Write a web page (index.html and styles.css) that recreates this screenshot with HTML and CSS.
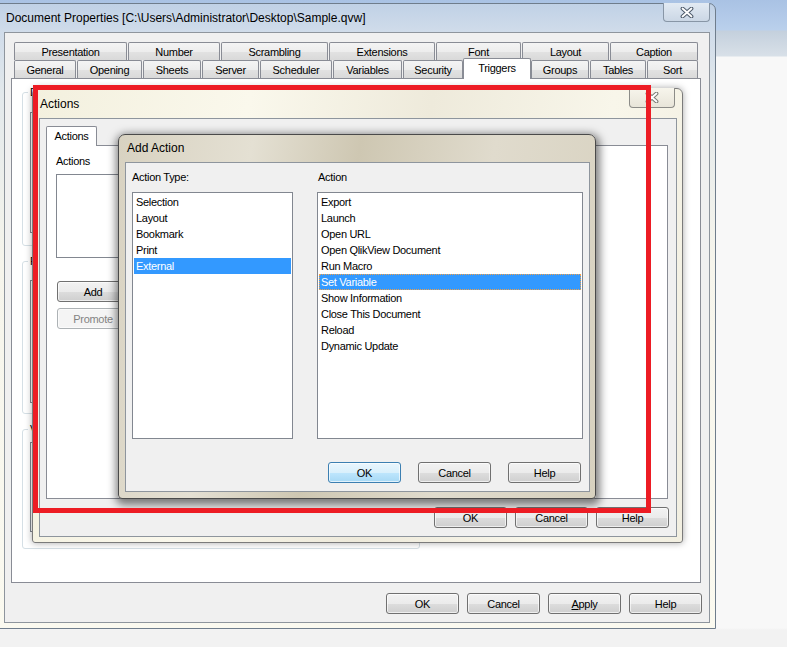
FILE: index.html
```html
<!DOCTYPE html>
<html lang="en">
<head>
<meta charset="utf-8">
<title>Document Properties</title>
<link rel="stylesheet" href="styles.css">
</head>
<body>
<div class="screen">

  <div class="win main-win">
    <div class="titlebar main-title">
      <span class="title-text">Document Properties [C:\Users\Administrator\Desktop\Sample.qvw]</span>
      <div class="cap-close main-close">
        <svg width="14" height="11" viewBox="0 0 14 11"><path class="x-out" d="M2.5 1.5 L11.5 9.5 M11.5 1.5 L2.5 9.5"/><path class="x-in" d="M2.5 1.5 L11.5 9.5 M11.5 1.5 L2.5 9.5"/></svg>
      </div>
    </div>
    <div class="client main-client">
      <div class="tabrows">
        <div class="tabrow row1">
          <div class="tab t-presentation">Presentation</div>
          <div class="tab t-number">Number</div>
          <div class="tab t-scrambling">Scrambling</div>
          <div class="tab t-extensions">Extensions</div>
          <div class="tab t-font">Font</div>
          <div class="tab t-layout">Layout</div>
          <div class="tab t-caption">Caption</div>
        </div>
        <div class="tabrow row2">
          <div class="tab t-general">General</div>
          <div class="tab t-opening">Opening</div>
          <div class="tab t-sheets">Sheets</div>
          <div class="tab t-server">Server</div>
          <div class="tab t-scheduler">Scheduler</div>
          <div class="tab t-variables">Variables</div>
          <div class="tab t-security">Security</div>
          <div class="tab sel t-triggers">Triggers</div>
          <div class="tab t-groups">Groups</div>
          <div class="tab t-tables">Tables</div>
          <div class="tab t-sort">Sort</div>
        </div>
      </div>
      <div class="panel main-panel">
        <fieldset class="gbox g1"><legend>Document Event Triggers</legend><div class="listbox glist l1"></div></fieldset>
        <fieldset class="gbox g2"><legend>Field Event Triggers</legend><div class="listbox glist l2"></div></fieldset>
        <fieldset class="gbox g3"><legend>Variable Event Triggers</legend><div class="listbox glist l3"></div></fieldset>
      </div>
      <div class="btnrow main-btns">
        <div class="btn">OK</div>
        <div class="btn">Cancel</div>
        <div class="btn"><u>A</u>pply</div>
        <div class="btn">Help</div>
      </div>
    </div>
  </div>

  <div class="win actions-win">
    <div class="titlebar dlg-title">
      <span class="title-text">Actions</span>
      <div class="cap-close dlg-close">
        <svg width="14" height="11" viewBox="0 0 14 11"><path class="x-out light" d="M2.5 1.5 L11.5 9.5 M11.5 1.5 L2.5 9.5"/><path class="x-in" d="M2.5 1.5 L11.5 9.5 M11.5 1.5 L2.5 9.5"/></svg>
      </div>
    </div>
    <div class="client actions-client">
      <div class="tabrow small-tabs">
        <div class="tab sel t-actions">Actions</div>
      </div>
      <div class="panel actions-panel">
        <div class="lbl">Actions</div>
        <div class="listbox actions-list"></div>
        <div class="btn side-btn add-btn">Add</div>
        <div class="btn side-btn dis">Promote</div>
      </div>
      <div class="btnrow actions-btns">
        <div class="btn">OK</div>
        <div class="btn">Cancel</div>
        <div class="btn">Help</div>
      </div>
    </div>
  </div>

  <div class="win add-win">
    <div class="titlebar add-title">
      <span class="title-text">Add Action</span>
    </div>
    <div class="client add-client">
      <div class="cols">
        <div class="col col-type">
          <div class="lbl">Action Type:</div>
          <div class="listbox big-list">
            <div class="item">Selection</div>
            <div class="item">Layout</div>
            <div class="item">Bookmark</div>
            <div class="item">Print</div>
            <div class="item selected">External</div>
          </div>
        </div>
        <div class="col col-action">
          <div class="lbl">Action</div>
          <div class="listbox big-list">
            <div class="item">Export</div>
            <div class="item">Launch</div>
            <div class="item">Open URL</div>
            <div class="item">Open QlikView Document</div>
            <div class="item">Run Macro</div>
            <div class="item selected focused">Set Variable</div>
            <div class="item">Show Information</div>
            <div class="item">Close This Document</div>
            <div class="item">Reload</div>
            <div class="item">Dynamic Update</div>
          </div>
        </div>
      </div>
      <div class="btnrow add-btns">
        <div class="btn default">OK</div>
        <div class="btn">Cancel</div>
        <div class="btn">Help</div>
      </div>
    </div>
  </div>

  <div class="redbox"></div>
</div>
</body>
</html>
```

FILE: styles.css
```css
* { box-sizing: border-box; }
html, body { margin: 0; padding: 0; }
body {
  width: 787px;
  height: 647px;
  overflow: hidden;
  font-family: "Liberation Sans", Arial, sans-serif;
  font-size: 11px;
  letter-spacing: -0.3px;
  color: #000;
  background: linear-gradient(to bottom, #a9c2e4 0, #bad0ec 30px, #c4d0dd 31px, #d8e0e8 56px, #f8f8f8 57px, #f8f8f8 628px, #f2f2f2 630px);
}
.screen { position: relative; width: 787px; height: 647px; }

.win { position: absolute; display: flex; flex-direction: column; }
.titlebar { display: flex; align-items: flex-start; flex: none; }
.title-text { font-size: 12px; letter-spacing: 0; white-space: nowrap; }
.cap-close { margin-left: auto; display: flex; align-items: center; justify-content: center; flex: none; }
.x-out { stroke: #4d5a6a; stroke-width: 3.8; stroke-linecap: round; fill: none; }
.x-out.light { stroke: #7a7a74; }
.x-in { stroke: #ffffff; stroke-width: 1.8; stroke-linecap: round; fill: none; }

/* main window */
.main-win {
  left: -1px; top: 3px; width: 717px; height: 626px;
  border: 1px solid #6f7d8c;
  border-top-right-radius: 7px;
  background: linear-gradient(to bottom, #c0d1e6 0, #d0dcea 28px, #e3e9ec 90px, #f6f5ec 260px, #fbfaf0 100%);
}
.main-title { height: 28px; padding-left: 6px; }
.main-title .title-text { line-height: 28px; }
.main-close {
  width: 47px; height: 19px; margin-top: -1px; margin-right: 5px;
  border: 1px solid #8896a6; border-top: none; border-radius: 0 0 4px 4px;
  background: linear-gradient(#e2eaf3, #cbd7e5);
}
.client { background: #f0f0f0; border: 1px solid #8e959d; display: flex; flex-direction: column; flex: none; }
.main-client { margin-left: 4px; width: 706px; height: 591px; padding: 9px 0 0 6px; }

.tabrows { width: 690px; }
.tabrow { display: flex; padding-left: 3px; height: 18px; }
.tab {
  flex: none; height: 18px; margin-right: 1px;
  border: 1px solid #898c95; border-bottom: none; border-radius: 2px 2px 0 0;
  background: linear-gradient(#f4f4f4 0%, #ededed 50%, #e2e2e2 51%, #d9d9d9 100%);
  text-align: center; line-height: 18px; white-space: nowrap; overflow: hidden;
}
.tab.sel {
  position: relative; z-index: 2;
  background: #fff;
}
.t-presentation { width: 113px; }
.t-number { width: 92px; }
.t-scrambling { width: 107px; }
.t-extensions { width: 106px; }
.t-font { width: 85px; }
.t-layout { width: 87px; }
.t-caption { width: 88px; margin-right: 0; }
.t-general { width: 62px; }
.t-opening { width: 65px; }
.t-sheets { width: 58px; }
.t-server { width: 57px; }
.t-scheduler { width: 72px; }
.t-variables { width: 69px; }
.t-security { width: 60px; margin-right: 0; }
.t-triggers { width: 68px; height: 21px; margin-top: -2px; margin-right: 0; line-height: 19px; }
.t-groups { width: 58px; }
.t-tables { width: 56px; }
.t-sort { width: 51px; margin-right: 0; }

.panel { background: #fff; border: 1px solid #898c95; flex: none; }
.main-panel { width: 690px; height: 505px; padding: 8px 0 0 10px; }

.gbox {
  margin: 0; padding: 0; width: 398px;
  border: 1px solid #d5dfe5; border-radius: 3px;
}
.gbox legend { padding: 0 2px; margin-left: 5px; line-height: 11px; }
.g1 { height: 159px; margin-bottom: 10px; }
.g2 { height: 158px; margin-bottom: 10px; }
.g3 { height: 125px; }
.listbox { background: #fff; border: 1px solid #828790; }
.glist { margin-left: 7px; width: 380px; }
.l1 { margin-top: 14px; height: 121px; }
.l2 { margin-top: 13px; height: 123px; }
.l3 { margin-top: 7px; height: 90px; }

.btnrow { display: flex; justify-content: flex-end; flex: none; }
.btn {
  width: 73px; height: 21px; flex: none;
  border: 1px solid #707070; border-radius: 3px;
  background: linear-gradient(#f2f2f2 0%, #ebebeb 50%, #dddddd 51%, #cfcfcf 100%);
  box-shadow: inset 0 0 0 1px rgba(255,255,255,0.65);
  display: flex; align-items: center; justify-content: center;
  white-space: nowrap;
}
.btn.default {
  border-color: #3c7fb1;
  background: linear-gradient(#eaf6fd 0%, #d9f0fc 50%, #bee6fd 51%, #a7d9f5 100%);
}
.btn.dis {
  border-color: #adb2b5; color: #838383;
  background: #f4f4f4;
}
.main-btns { margin-top: 10px; gap: 8px; padding-right: 7px; }

/* actions dialog */
.actions-win {
  left: 32px; top: 88px; width: 651px; height: 455px;
  border: 1px solid #7b7b7b; border-radius: 6px 6px 3px 3px;
  background: linear-gradient(100deg, #f3f0de 0%, #faf8ec 30%, #eeeadb 55%, #f8f6ea 80%, #f2efe1 100%);
  box-shadow: 0 0 7px rgba(0,0,0,0.35);
}
.dlg-title { height: 29px; padding-left: 7px; }
.dlg-title .title-text { line-height: 12px; margin-top: 9px; }
.dlg-close {
  width: 46px; height: 20px; margin-top: -1px; margin-right: 7px;
  border: 1px solid #8c8c88; border-top: none; border-radius: 0 0 4px 4px;
  background: linear-gradient(#f7f5ec, #e8e5d9);
}
.actions-client { margin-left: 6px; width: 638px; height: 419px; padding: 7px 0 0 6px; }
.small-tabs { padding-left: 0; height: 19px; }
.t-actions { width: 51px; height: 20px; line-height: 19px; }
.actions-panel { width: 622px; height: 354px; padding: 9px 0 0 9px; }
.lbl { line-height: 13px; height: 13px; white-space: nowrap; }
.actions-list { margin-top: 6px; width: 440px; height: 84px; }
.side-btn { width: 72px; margin-left: 1px; }
.add-btn { margin-top: 23px; margin-bottom: 6px; }
.actions-btns { margin-top: 8px; gap: 8px; padding-right: 7px; }

/* add action dialog */
.add-win {
  left: 118px; top: 134px; width: 478px; height: 365px;
  border: 1px solid #4a4a4a; border-radius: 7px 7px 4px 4px;
  background: linear-gradient(100deg, #d8d2c1 0%, #e4e0d3 25%, #cec7b2 45%, #e0dbcd 70%, #d7d1bf 100%);
  box-shadow: 1px 3px 9px 3px rgba(0,0,0,0.5);
}
.add-title { height: 27px; padding-left: 8px; }
.add-title .title-text { line-height: 27px; }
.add-client { margin-left: 6px; width: 465px; height: 330px; padding: 8px 6px 7px 6px; }
.cols { display: flex; gap: 24px; }
.col .lbl { margin-top: 0; margin-bottom: 8px; }
.col-type { width: 161px; }
.col-action { width: 266px; }
.col-action .lbl { padding-left: 1px; }
.big-list { height: 247px; padding: 1px; }
.item { height: 16px; line-height: 16px; padding-left: 2px; white-space: nowrap; }
.item.selected { background: #3399ff; color: #fff; }
.item.focused { outline: 1px dotted #f0a048; outline-offset: -1px; }
.add-btns { margin-top: 23px; gap: 17px; padding-right: 2px; }

/* highlight rectangle */
.redbox {
  position: absolute; left: 33px; top: 85px; width: 618px; height: 428px;
  border: 5px solid #ed1c24;
}
```
